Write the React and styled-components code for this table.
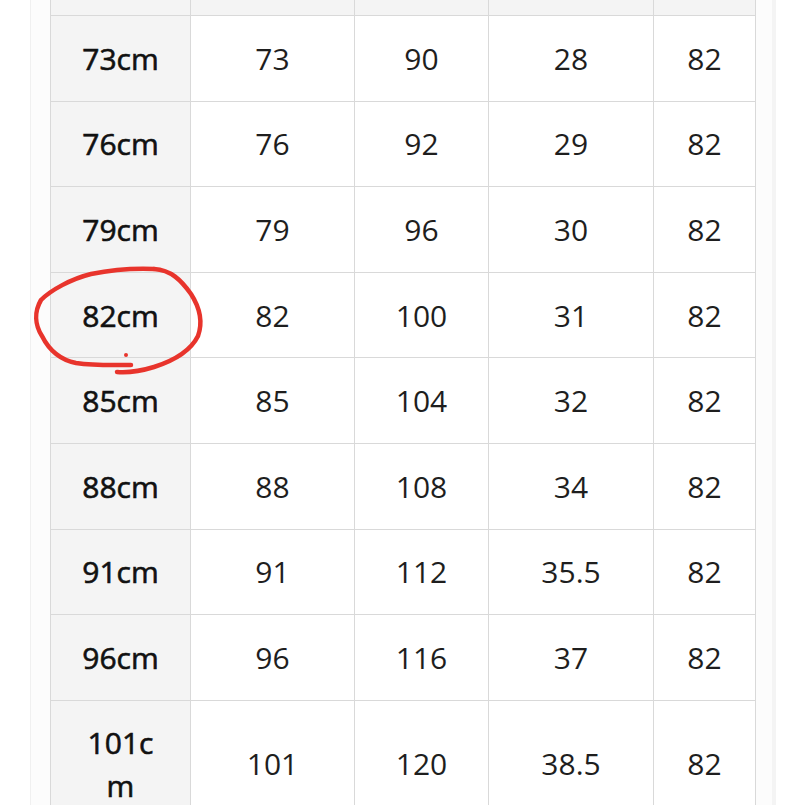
import React from 'react';
import styled, { createGlobalStyle } from 'styled-components';

const GlobalStyle = createGlobalStyle`
  html, body {
    margin: 0;
    padding: 0;
    background: #ffffff;
  }
  body {
    font-family: "Open Sans", "Noto Sans", sans-serif;
    overflow: hidden;
  }
`;

const Page = styled.div`
  width: 805px;
  height: 805px;
  overflow: hidden;
  padding-left: 30px;
  box-sizing: border-box;
  background: #ffffff;
`;

const Panel = styled.div`
  position: relative;
  width: 746px;
  min-height: 805px;
  box-sizing: border-box;
  padding-left: 19px;
  background: #fcfcfc;
  border-left: 1px solid #f0f0f0;
  border-right: 4px solid #f4f4f4;
`;

const Grid = styled.div`
  display: grid;
  grid-template-columns: 139px 163px 133px 164px 101px;
  grid-template-rows: 15px;
  grid-auto-rows: minmax(84.6px, auto);
  gap: 1px;
  padding: 0 1px 1px 1px;
  width: max-content;
  background: #d9d9d9;
`;

const HeadCell = styled.div`
  background: #f4f4f4;
`;

const Cell = styled.div`
  display: flex;
  align-items: center;
  justify-content: center;
  text-align: center;
  padding: 20px 30px;
  box-sizing: border-box;
  font-size: 30px;
  line-height: 43px;
  word-break: break-all;
  background: ${p => (p.$label ? '#f4f4f4' : '#ffffff')};
  color: ${p => (p.$label ? '#111111' : '#1e1e1e')};
  -webkit-text-stroke: ${p => (p.$label ? '0.6px #111111' : '0')};
`;

const Mark = styled.svg`
  position: absolute;
  left: -30px;
  top: 0;
  pointer-events: none;
`;

const rows = [
  ['73cm', '73', '90', '28', '82'],
  ['76cm', '76', '92', '29', '82'],
  ['79cm', '79', '96', '30', '82'],
  ['82cm', '82', '100', '31', '82'],
  ['85cm', '85', '104', '32', '82'],
  ['88cm', '88', '108', '34', '82'],
  ['91cm', '91', '112', '35.5', '82'],
  ['96cm', '96', '116', '37', '82'],
  ['101cm', '101', '120', '38.5', '82'],
];

const App = () => {
  return (
    <Page>
      <GlobalStyle />
      <Panel>
        <Grid>
          {[0, 1, 2, 3, 4].map(i => (
            <HeadCell key={'h' + i} />
          ))}
          {rows.map(row =>
            row.map((value, i) => (
              <Cell key={row[0] + i} $label={i === 0}>
                {value}
              </Cell>
            ))
          )}
        </Grid>
        <Mark width="805" height="805" viewBox="0 0 805 805">
          <path
            d="M153 269 C170 270 180 280 190 294 C199 308 202 322 197 336 C190 350 175 360 153 367 C140 371 128 373 116 372"
            fill="none"
            stroke="#e8342c"
            strokeWidth="4.5"
            strokeLinecap="round"
          />
          <path
            d="M153 269 C130 268 110 270 90 274 C70 279 50 290 40 300 C33 312 34 325 41 336 C48 350 60 360 75 363 C95 366 115 365 130 365"
            fill="none"
            stroke="#e8342c"
            strokeWidth="4.5"
            strokeLinecap="round"
          />
          <circle cx="125" cy="355" r="2" fill="#e8342c" />
        </Mark>
      </Panel>
    </Page>
  );
};

export default App;
